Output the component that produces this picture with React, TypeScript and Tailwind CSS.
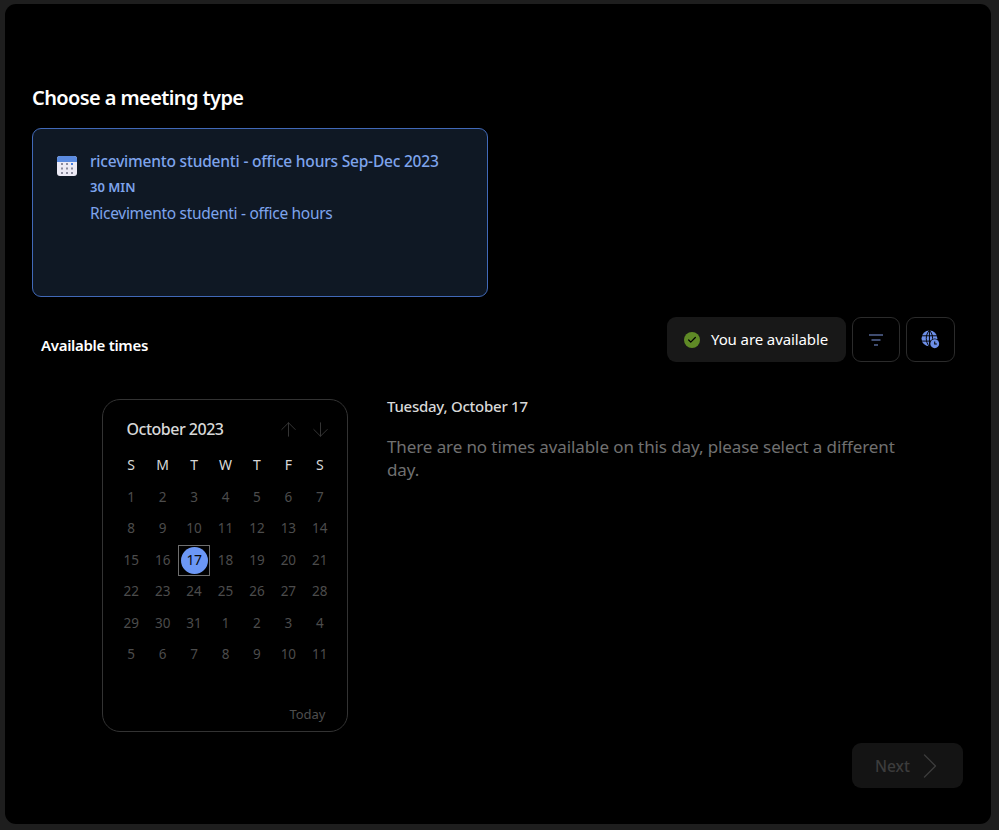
import { ArrowDown, ArrowUp, Check, ChevronRight } from "lucide-react";

const days = ["S", "M", "T", "W", "T", "F", "S"];
const cells = [
  1, 2, 3, 4, 5, 6, 7, 8, 9, 10, 11, 12, 13, 14, 15, 16, 17, 18, 19, 20, 21, 22, 23, 24, 25, 26, 27, 28, 29, 30, 31, 1, 2,
  3, 4, 5, 6, 7, 8, 9, 10, 11,
];

const CalendarIcon = () => (
  <svg width="20" height="20" viewBox="0 0 20 20">
    <rect width="20" height="20" rx="3" fill="#eceaf5" />
    <path d="M0 6V3a3 3 0 0 1 3-3h14a3 3 0 0 1 3 3v3z" fill="#5b8be0" />
    {[4, 8.5, 13].map((y) =>
      [5, 10, 15].map((x) => (
        <rect key={`${x}-${y + 4}`} x={x - 1} y={y + 4 - 1} width="2" height="2" fill={x === 15 && y === 4 ? "#4a80e0" : "#8a8a9c"} />
      ))
    )}
  </svg>
);

const GlobeClock = () => (
  <svg width="19" height="19" viewBox="0 0 18 18" fill="none">
    <circle cx="8" cy="8" r="7.5" fill="#6d8fe8" />
    <path d="M0.5 5.5h15M0.5 10.5h15M8 0.5v15M8 0.5C4 4 4 12 8 15.5M8 0.5c4 3.500 4 11.500 0 15" stroke="#000" strokeWidth="0.9" />
    <circle cx="13" cy="13" r="5" fill="#000" />
    <circle cx="13" cy="13" r="4.200" fill="#6d8fe8" />
    <path d="M13 10.800V13.300h2" stroke="#000" strokeWidth="1" />
  </svg>
);

const FilterIcon = () => (
  <svg width="16" height="12" viewBox="0 0 16 12" fill="none" stroke="#7f97de" strokeWidth="1.200">
    <path d="M1 1h14M3.500 6h9M6 11h4" />
  </svg>
);

export default function App() {
  return (
    <div className="w-[999px] h-[830px] bg-[#1e1e1e] pl-[5px] pr-2 pt-1 pb-[6px] font-['Noto_Sans',sans-serif]">
      <div className="h-full bg-black rounded-[11px] flex flex-col pl-[27px] pr-9">
        <h1 className="mt-[79px] text-xl leading-[30px] font-semibold text-white tracking-[-0.6px]">Choose a meeting type</h1>

        <div className="mt-[15px] w-[456px] h-[169px] rounded-[9px] border border-[#4169b8] bg-[#0f1824] pt-[21px] pl-6 flex gap-[13px]">
          <div className="mt-1.5">
            <CalendarIcon />
          </div>
          <div className="text-[#7ea4ec]">
            <p className="text-[15.5px] leading-[22px] font-medium tracking-[-0.2px] whitespace-nowrap">ricevimento studenti - office hours Sep-Dec 2023</p>
            <p className="mt-[5px] text-[13px] leading-[20px] font-semibold">30 MIN</p>
            <p className="mt-[5px] text-[15.5px] leading-[22px] tracking-[-0.3px]">Ricevimento studenti - office hours</p>
          </div>
        </div>

        <div className="mt-[20px] flex items-start">
          <p className="ml-[9px] mt-[17px] text-[15px] leading-[22px] font-semibold text-white tracking-[-0.3px]">Available times</p>
          <div className="ml-auto flex gap-[6px]">
            <div className="w-[179px] h-[45px] rounded-[9px] bg-[#181818] flex items-center pl-[17px] gap-[11px] text-white text-[15px] tracking-[-0.1px]">
              <span className="w-4 h-4 rounded-full bg-[#5f8a26] flex items-center justify-center">
                <Check size={10} strokeWidth={3} className="text-black" />
              </span>
              You are available
            </div>
            <div className="w-[48px] h-[45px] rounded-[9px] border border-[#2b2b2b] flex items-center justify-center">
              <FilterIcon />
            </div>
            <div className="w-[49px] h-[45px] rounded-[9px] border border-[#2b2b2b] flex items-center justify-center">
              <GlobeClock />
            </div>
          </div>
        </div>

        <div className="mt-[37px] ml-[70px] flex items-start gap-[39px]">
          <div className="w-[246px] h-[333px] shrink-0 rounded-[18px] border border-[#333] flex flex-col pl-[12.5px] pr-[11.5px]">
            <div className="mt-[17px] h-6 flex items-center">
              <span className="ml-[11px] text-base leading-[24px] font-medium text-[#d8d8d8] tracking-[-0.5px]">October 2023</span>
              <span className="ml-auto mr-[4px] flex gap-[9px] text-[#3d3d3d]">
                <ArrowUp size={23} strokeWidth={0.9} />
                <ArrowDown size={23} strokeWidth={0.9} />
              </span>
            </div>
            <div className="mt-[8px] grid grid-cols-7 h-[31.4px] text-sm">
              {days.map((d, i) => (
                <span key={i} className="flex items-center justify-center text-[#d8d8d8]">
                  {d}
                </span>
              ))}
            </div>
            <div className="mt-[1.5px] grid grid-cols-7 auto-rows-[31.4px] text-sm">
              {cells.map((n, i) =>
                i === 16 ? (
                  <span key={i} className="border border-[#6e6e6e] flex items-center justify-center">
                    <span className="w-[27px] h-[27px] rounded-full bg-[#6c97f5] flex items-center justify-center text-[#0a0a0a] tracking-[-0.5px]">{n}</span>
                  </span>
                ) : (
                  <span key={i} className="flex items-center justify-center text-[#4c4c4c] text-[13.5px]">
                    {n}
                  </span>
                )
              )}
            </div>
            <span className="mt-auto mb-[7px] mr-[10px] self-end text-[13px] leading-5 text-[#4e4e4e]">Today</span>
          </div>

          <div className="-mt-[5px] w-[530px]">
            <p className="text-[15px] leading-[24px] font-medium text-[#d8d8d8] tracking-[-0.25px]">Tuesday, October 17</p>
            <p className="mt-[17px] text-[17px] leading-[23px] tracking-[-0.1px] text-[#707070]">There are no times available on this day, please select a different day.</p>
          </div>
        </div>

        <div className="mt-[11px] ml-auto -mr-[8px] w-[111px] h-[45px] rounded-[9px] bg-[#141414] flex items-center pl-[23px] text-[#3c3c3c] text-[15.5px] font-medium">
          <span className="mt-[2px]">Next</span>
          <ChevronRight size={44} strokeWidth={0.7} className="-ml-0.5" />
        </div>
      </div>
    </div>
  );
}
